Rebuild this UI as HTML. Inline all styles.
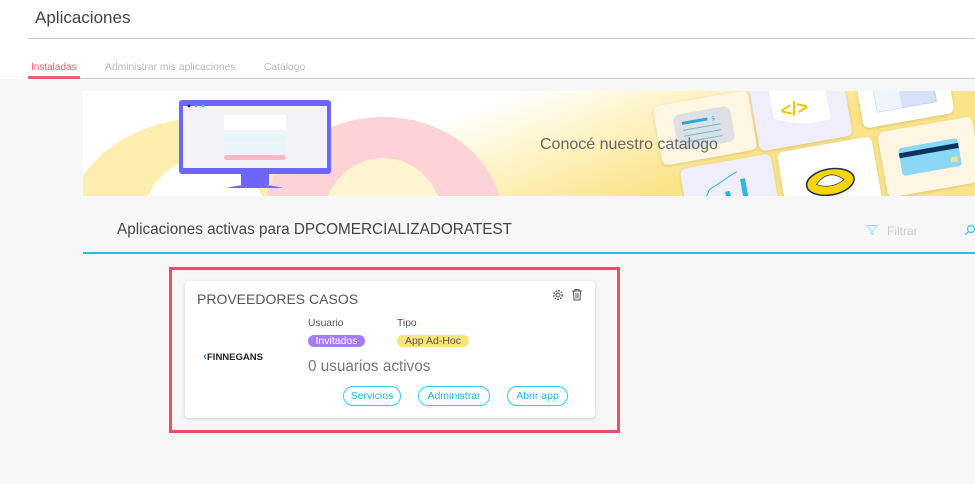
<!DOCTYPE html>
<html><head><meta charset="utf-8"><style>
*{margin:0;padding:0;box-sizing:border-box}
body{width:975px;height:484px;overflow:hidden;background:#f7f7f7;font-family:"Liberation Sans",sans-serif;position:relative}
.top{position:absolute;left:0;top:0;width:975px;height:79px;background:#fff}
.abs{position:absolute;white-space:nowrap}
.btn{height:20px;border:1px solid #2ad0f0;border-radius:10px;color:#1ab8e0;font-size:10.5px;text-align:center;line-height:19px}
.tag{height:12px;border-radius:6px;font-size:10.5px;text-align:center;line-height:12px}
</style></head><body>
<div class="top"></div>
<div class="abs" style="left:35px;top:8px;font-size:17px;color:#444">Aplicaciones</div>
<div class="abs" style="left:28px;top:38px;width:947px;height:1px;background:#ccc"></div>
<div class="abs" style="left:31px;top:62px;font-size:10px;color:#f25c6a">Instaladas</div>
<div class="abs" style="left:28px;top:76px;width:52px;height:3px;background:#f25c6a"></div>
<div class="abs" style="left:105px;top:62px;font-size:10.3px;color:#bbb">Administrar mis aplicaciones</div>
<div class="abs" style="left:264px;top:62px;font-size:10.3px;color:#bbb">Catálogo</div>
<div class="abs" style="left:80px;top:78px;width:895px;height:1px;background:#ccc"></div>

<svg class="abs" style="left:83px;top:91px" width="892" height="105" viewBox="0 0 892 105">
<defs><linearGradient id="g" x1="0" y1="0" x2="1" y2="0.3">
<stop offset="0.45" stop-color="#fff"/><stop offset="0.6" stop-color="#fff6cf"/><stop offset="0.85" stop-color="#fbe38a"/></linearGradient>
<filter id="s"><feDropShadow dx="0" dy="1" stdDeviation="1.5" flood-opacity="0.15"/></filter></defs>
<rect width="892" height="105" fill="url(#g)"/>
<ellipse cx="122" cy="140" rx="140" ry="113" fill="#fdeeb0"/>
<ellipse cx="122" cy="130" rx="62" ry="63" fill="#fff"/>
<ellipse cx="300" cy="130" rx="120" ry="104" fill="#fdd3d8"/>
<ellipse cx="300" cy="130" rx="60" ry="63" fill="#fff4d0"/>
<rect x="96" y="9" width="152" height="74" rx="3" fill="#6e66fc"/>
<rect x="100" y="15" width="144" height="62" fill="#f3f3f6"/>
<circle cx="106" cy="15" r="1.4" fill="#223"/><circle cx="113" cy="15" r="1.4" fill="#88f"/><circle cx="120" cy="15" r="1.4" fill="#3cf"/>
<rect x="141" y="24" width="62" height="15" fill="#fff"/>
<rect x="141" y="44" width="62" height="7" fill="#e6f5fa"/>
<rect x="141" y="54" width="62" height="7" fill="#e6f5fa"/>
<rect x="141" y="64" width="62" height="5" rx="2.5" fill="#fdb8c6"/>
<rect x="158" y="83" width="28" height="11" fill="#6e66fc"/>
<path d="M143 97 Q172 90 200 97Z" fill="#6e66fc"/>
<g filter="url(#s)">
<g transform="translate(622,37) rotate(-10)"><rect x="-48" y="-30" width="96" height="60" rx="6" fill="#fdf6e3"/>
<rect x="-30" y="-18" width="58" height="36" rx="7" fill="#dde1e6"/>
<rect x="-22" y="-10" width="26" height="3" fill="#29a8d0"/><text x="8" y="-6" font-size="6" fill="#29a8d0">$</text>
<rect x="-22" y="-2" width="38" height="1" fill="#6bc"/><rect x="-22" y="4" width="38" height="1" fill="#6bc"/><rect x="-22" y="10" width="38" height="1" fill="#6bc"/></g>
<g transform="translate(717,15) rotate(-10)"><rect x="-47" y="-38" width="94" height="76" rx="6" fill="#efeefa"/>
<path d="M-28 -38 H28 V18 Q0 22 -28 8Z" fill="#fff"/>
<text x="-20" y="8" font-size="19" fill="#f7c600" font-weight="bold">&lt;/&gt;</text></g>
<g transform="translate(822,5) rotate(-10)"><rect x="-46" y="-30" width="92" height="55" rx="6" fill="#fff"/>
<rect x="-30" y="-25" width="60" height="36" fill="#d6e2f7" stroke="#c0d0f0"/><rect x="-30" y="-25" width="25" height="36" fill="#f0f4fc"/></g>
<g transform="translate(647,100) rotate(-10)"><rect x="-46" y="-30" width="92" height="70" rx="6" fill="#efeefa"/>
<path d="M-30 10 L-20 -5 L10 -18" stroke="#29b8e0" fill="none"/><rect x="-5" y="0" width="5" height="20" fill="#29b8e0"/><rect x="12" y="-10" width="5" height="30" fill="#29b8e0"/></g>
<g transform="translate(747,89) rotate(-10)"><rect x="-48" y="-36" width="96" height="76" rx="6" fill="#fff"/>
<ellipse cx="0" cy="2" rx="24" ry="13" fill="#f7d600" stroke="#1a2a60" stroke-width="1.5"/>
<path d="M-14 2 Q0 -12 14 2 Q0 10 -14 2Z" fill="#fff" stroke="#1a2a60" stroke-width="0.7"/></g>
<g transform="translate(847,66) rotate(-10)"><rect x="-48" y="-33" width="96" height="66" rx="6" fill="#fdf6e3"/>
<rect x="-30" y="-14" width="60" height="28" rx="3" fill="#8ad7f6"/>
<rect x="-30" y="-9" width="60" height="5" fill="#103060"/><rect x="20" y="4" width="7" height="5" fill="#f3e08a"/></g>
<g transform="translate(935,5) rotate(-10)"><rect x="-40" y="-30" width="80" height="55" rx="6" fill="#fdf6e3"/></g>
</g>
<text x="457" y="58" font-size="16" fill="#666" font-family="Liberation Sans">Conocé nuestro catalogo</text>
</svg>

<div class="abs" style="left:117px;top:221px;font-size:15.3px;color:#444">Aplicaciones activas para DPCOMERCIALIZADORATEST</div>
<svg class="abs" style="left:866px;top:224px" width="12" height="12" viewBox="0 0 12 12"><path d="M1 1.5H11L7 6.5V10.5L5 9.5V6.5Z" fill="none" stroke="#8fe0f5" stroke-width="1"/></svg>
<div class="abs" style="left:887px;top:224px;font-size:12px;color:#ccc">Filtrar</div>
<svg class="abs" style="left:964px;top:224px" width="11" height="12" viewBox="0 0 11 12"><circle cx="7" cy="5" r="3.5" fill="none" stroke="#2bc6ef" stroke-width="1.2"/><path d="M4.5 7.5L1 11" stroke="#2bc6ef" stroke-width="1.2"/></svg>
<div class="abs" style="left:83px;top:252px;width:892px;height:2px;background:#1ec2ec"></div>

<div class="abs" style="left:169px;top:267px;width:451px;height:166px;border:3px solid #f24a68"></div>
<div class="abs" style="left:185px;top:281px;width:410px;height:137px;background:#fff;border-radius:4px;box-shadow:0 1px 4px rgba(0,0,0,.15)"></div>
<div class="abs" style="left:197px;top:291px;font-size:14px;color:#555">PROVEEDORES CASOS</div>
<svg class="abs" style="left:552px;top:289px" width="12" height="12" viewBox="0 0 12 12"><circle cx="6" cy="6" r="2" fill="none" stroke="#555" stroke-width="1"/><circle cx="6" cy="6" r="4.3" fill="none" stroke="#555" stroke-width="1.4" stroke-dasharray="1.7 1.2"/></svg>
<svg class="abs" style="left:571px;top:288px" width="12" height="13" viewBox="0 0 12 13"><path d="M1 3H11M4 3V1.5H8V3M2.5 3.5L3 12H9L9.5 3.5M5 5V10.5M7 5V10.5" fill="none" stroke="#555" stroke-width="1"/></svg>
<div class="abs" style="left:203px;top:352px;font-size:9.5px;font-weight:bold;color:#222"><span style="color:#3a8ff0;font-size:12px;line-height:9px">‹</span>FINNEGANS</div>
<div class="abs" style="left:308px;top:318px;font-size:10.3px;color:#555">Usuario</div>
<div class="abs" style="left:397px;top:318px;font-size:10.3px;color:#555">Tipo</div>
<div class="abs tag" style="left:308px;top:335px;width:57px;background:#a57cf4;color:#fff">Invitados</div>
<div class="abs tag" style="left:397px;top:335px;width:72px;background:#fbe57a;color:#555">App Ad-Hoc</div>
<div class="abs" style="left:308px;top:358px;font-size:15.3px;color:#777">0 usuarios activos</div>
<div class="abs btn" style="left:343px;top:386px;width:58px">Servicios</div>
<div class="abs btn" style="left:418px;top:386px;width:72px">Administrar</div>
<div class="abs btn" style="left:507px;top:386px;width:61px">Abrir app</div>
</body></html>
